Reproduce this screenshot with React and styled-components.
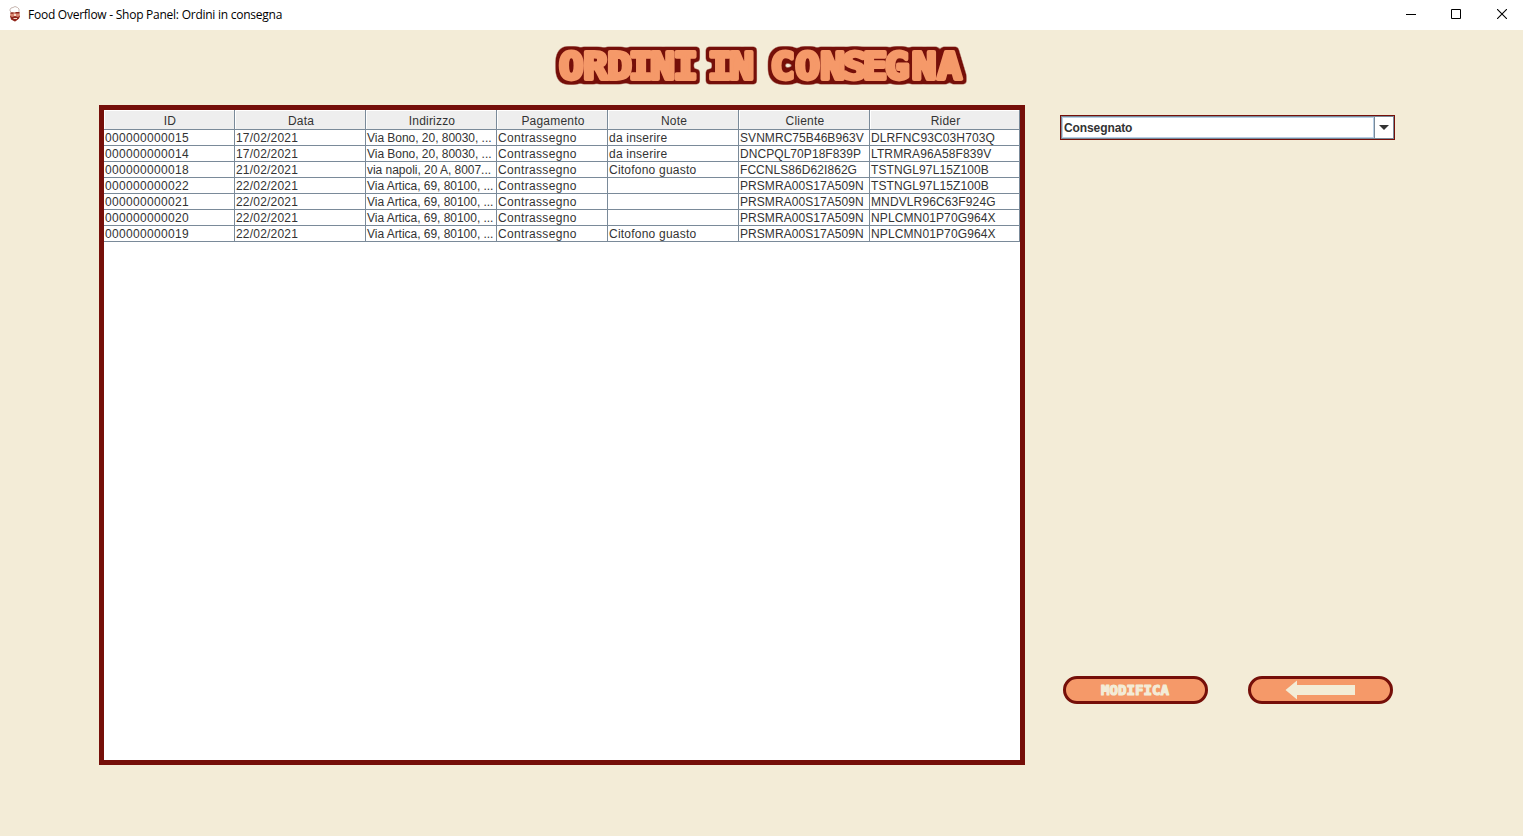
import React from "react";
import styled, { createGlobalStyle, css } from "styled-components";

const maroon = "#750f09";
const peach = "#f59969";
const cream = "#f3ecd7";
const steel = "#7a8a99";

const Global = createGlobalStyle`
  body { margin: 0; background: ${cream}; font-family: "Liberation Sans", Arial, sans-serif; }
`;

const Window = styled.div`
  width: 1523px; height: 836px; display: flex; flex-direction: column;
  background: ${cream}; overflow: hidden;
`;
const TitleBar = styled.header`
  height: 30px; flex: none; display: flex; align-items: center; background: #fff;
`;
const AppIcon = styled.svg`
  width: 16px; height: 16px; margin: 0 5px 2px 7px; flex: none;
`;
const Caption = styled.span`
  flex: 1; font: 12px/16px "Open Sans", "Noto Sans", sans-serif; color: #000;
  letter-spacing: -0.25px;
`;
const WindowButton = styled.button`
  box-sizing: border-box; width: 46px; height: 30px; border: 0; background: none;
  padding: 0 0 2px ${(p) => p.$inset}px;
  display: flex; align-items: center; justify-content: center;
  svg { display: block; }
`;
const Heading = styled.h1`
  margin: 14px 0 0 551px; height: 48px; flex: none;
  svg { display: block; }
`;
const Lettering = styled.text`
  font-family: "DejaVu Sans Mono", monospace; font-weight: 700;
`;
const Main = styled.main`
  display: flex; align-items: flex-start; padding: 13px 0 0 99px;
`;
const TablePanel = styled.section`
  box-sizing: border-box; width: 926px; height: 660px;
  border: 5px solid ${maroon}; background: #fff;
`;
const Row = styled.div`
  display: grid; grid-template-columns: 131px 131px 131px 111px 131px 131px 150px;
`;
const cell = css`
  box-sizing: border-box; font-size: 12px; color: #333; white-space: pre;
  border-right: 1px solid ${steel}; border-bottom: 1px solid ${steel};
`;
const HeadCell = styled.div`
  ${cell}
  height: 20px; line-height: 22px; padding-left: 2px; text-align: center; background: #eee;
  letter-spacing: 0.2px; box-shadow: inset 1px 1px #fff;
`;
const Cell = styled.div`
  ${cell}
  height: 16px; line-height: 17px; padding-left: 1px; letter-spacing: ${(p) => p.$spacing}px;
`;
const Side = styled.aside`
  width: 335px; height: 589px; margin: 10px 0 0 35px;
  display: flex; flex-direction: column; justify-content: space-between;
`;
const Select = styled.div`
  box-sizing: border-box; height: 25px; border: 1px solid ${maroon}; display: flex; background: #fff;
`;
const SelectValue = styled.div`
  box-sizing: border-box; flex: 1; border: 1px solid ${steel}; border-right: 0;
  box-shadow: inset 0 0 0 1px #b8cfe5; padding-left: 2px;
  font-size: 12px; font-weight: 700; line-height: 23px; color: #333; letter-spacing: -0.1px;
`;
const SelectArrow = styled.div`
  box-sizing: border-box; width: 20px; border: 1px solid ${steel};
  display: flex; align-items: center; justify-content: center;
`;
const Actions = styled.div`
  display: flex; justify-content: space-between; padding: 0 2px 0 3px;
`;
const PillButton = styled.button`
  box-sizing: border-box; width: 145px; height: 28px; padding: 0;
  border: 3px solid ${maroon}; border-radius: 14px; background: ${peach};
  svg { display: block; }
`;

const columns = ["ID", "Data", "Indirizzo", "Pagamento", "Note", "Cliente", "Rider"];
const spacing = [0.33, 0.2, -0.03, 0.33, 0.22, 0.06, 0.12];
const rows = [
  ["000000000015", "17/02/2021", "Via Bono, 20, 80030, ...", "Contrassegno", "da inserire", "SVNMRC75B46B963V", "DLRFNC93C03H703Q"],
  ["000000000014", "17/02/2021", "Via Bono, 20, 80030, ...", "Contrassegno", "da inserire", "DNCPQL70P18F839P", "LTRMRA96A58F839V"],
  ["000000000018", "21/02/2021", "via napoli, 20 A, 8007...", "Contrassegno", "Citofono guasto", "FCCNLS86D62I862G", "TSTNGL97L15Z100B"],
  ["000000000022", "22/02/2021", "Via Artica, 69, 80100, ...", "Contrassegno", "", "PRSMRA00S17A509N", "TSTNGL97L15Z100B"],
  ["000000000021", "22/02/2021", "Via Artica, 69, 80100, ...", "Contrassegno", "", "PRSMRA00S17A509N", "MNDVLR96C63F924G"],
  ["000000000020", "22/02/2021", "Via Artica, 69, 80100, ...", "Contrassegno", "", "PRSMRA00S17A509N", "NPLCMN01P70G964X"],
  ["000000000019", "22/02/2021", "Via Artica, 69, 80100, ...", "Contrassegno", "Citofono guasto", "PRSMRA00S17A509N", "NPLCMN01P70G964X"],
];

// Centre of every glyph of the heading, spaces included.
const glyphCentres = [20.3, 44.5, 68.5, 90, 111.5, 134.5, 152, 169, 190.7, 211, 231.5, 256.5, 281.5, 303.5, 324, 346, 373, 398.6];
const glyphHalf = 11.2;
const glyphStretch = 1.1;

function ChefIcon() {
  return (
    <AppIcon viewBox="0 0 16 16">
      <path d="M4 6.500 2.800 4 4 2 6 1.500 8 .5 10.500 1.500 12 3 12 6.500Z" fill="#fff" stroke="#b9a39c" strokeWidth=".8" />
      <path d="M3.500 6.500h9l.5 4-2 3-3 2-3-2-2-3Z" fill="#d98872" />
      <path d="M3.500 6.500h3v1.200h-3zM8.500 6h4v1.500h-4zM3 9.500l2 1.500 3-1 3 1 2-1.500-1 3-4 3-4-2Z" fill="#8d251c" />
      <path d="M7 8h2v2H7zM6.500 12h3.500v1H6.500z" fill="#f6d9ca" />
    </AppIcon>
  );
}

export default function App() {
  return (
    <Window>
      <Global />
      <TitleBar>
        <ChefIcon />
        <Caption>Food Overflow - Shop Panel: Ordini in consegna</Caption>
        <WindowButton $inset={6} aria-label="Minimize">
          <svg width="10" height="10"><path d="M0 5.5h10" stroke="#000" /></svg>
        </WindowButton>
        <WindowButton $inset={4} aria-label="Maximize">
          <svg width="10" height="10"><path d="M.5 .5h9v9h-9z" fill="none" stroke="#000" /></svg>
        </WindowButton>
        <WindowButton $inset={4} aria-label="Close">
          <svg width="10" height="10"><path d="M0 0 10 10M10 0 0 10" stroke="#000" strokeWidth="1.1" /></svg>
        </WindowButton>
      </TitleBar>
      <Heading>
        <svg width="420" height="48">
          <filter id="outline" x="-5%" y="-20%" width="110%" height="140%" colorInterpolationFilters="sRGB">
            <feMorphology in="SourceAlpha" operator="dilate" radius="3" />
            <feGaussianBlur stdDeviation="1.5" />
            <feComponentTransfer result="mask"><feFuncA type="linear" slope="3" intercept="-0.8" /></feComponentTransfer>
            <feFlood floodColor={maroon} />
            <feComposite in2="mask" operator="in" result="edge" />
            <feMerge><feMergeNode in="edge" /><feMergeNode in="SourceGraphic" /></feMerge>
          </filter>
          <g filter="url(#outline)">
            <Lettering
              transform={`scale(${glyphStretch} 1)`}
              x={glyphCentres.map((c) => c / glyphStretch - glyphHalf).join(" ")}
              y="35.2" fontSize="37.2" fill={peach} stroke={peach} strokeWidth="3.8" strokeLinejoin="round"
            >
              ORDINI IN CONSEGNA
            </Lettering>
          </g>
        </svg>
      </Heading>
      <Main>
        <TablePanel>
          <Row>{columns.map((c) => <HeadCell key={c}>{c}</HeadCell>)}</Row>
          {rows.map((r) => (
            <Row key={r[0]}>{r.map((v, i) => <Cell key={i} $spacing={spacing[i]}>{v}</Cell>)}</Row>
          ))}
        </TablePanel>
        <Side>
          <Select>
            <SelectValue>Consegnato</SelectValue>
            <SelectArrow>
              <svg width="10" height="5"><path d="M0 0h10L5 5Z" fill="#333" /></svg>
            </SelectArrow>
          </Select>
          <Actions>
            <PillButton>
              <svg width="139" height="22">
                <Lettering x="35" y="15.6" fontSize="14.2" textLength="68" lengthAdjust="spacingAndGlyphs"
                  fill={cream} stroke={cream} strokeWidth="1.2" strokeLinejoin="round">MODIFICA</Lettering>
              </svg>
            </PillButton>
            <PillButton aria-label="Indietro">
              <svg width="139" height="22"><path d="M34.5 11 46 1.500V6h58v10H46v4.500Z" fill={cream} /></svg>
            </PillButton>
          </Actions>
        </Side>
      </Main>
    </Window>
  );
}
